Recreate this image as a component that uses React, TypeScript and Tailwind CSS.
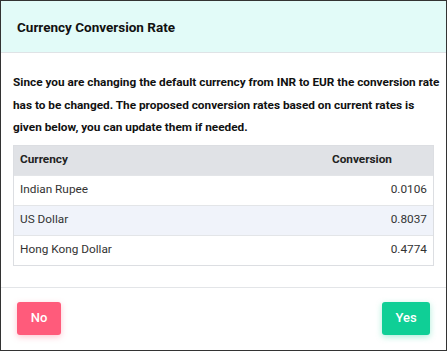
import React from "react";

const rows = [
  { name: "Indian Rupee", rate: "0.0106" },
  { name: "US Dollar", rate: "0.8037" },
  { name: "Hong Kong Dollar", rate: "0.4774" },
];

export default function App() {
  return (
    <div
      className="w-[448px] h-[353px] bg-white"
      style={{ fontFamily: "Roboto, 'Noto Sans', sans-serif" }}
    >
      <div className="w-[447px] h-[351px] border border-[#333] flex flex-col overflow-hidden">
        <div className="h-[52px] bg-[#e2fbf8] border-b border-[#dfe3e6] flex items-center px-4 shrink-0">
          <h2 className="text-[13.5px] font-bold text-[#111] mt-[1px]">Currency Conversion Rate</h2>
        </div>
        <div className="pl-3 pr-[11px] pt-[18px] flex flex-col">
          <p className="text-[11.8px] font-bold leading-[22.5px] text-[#111] whitespace-nowrap">
            Since you are changing the default currency from INR to EUR the conversion rate
            <br />
            has to be changed. The proposed conversion rates based on current rates is
            <br />
            given below, you can update them if needed.
          </p>
          <div className="mt-[6px] mr-[1px] border border-[#dcdee2] text-[11.8px] text-[#333]">
            <div className="h-[29px] bg-[#e0e2e6] flex items-center justify-between pl-[6px] pr-[41px] font-bold text-[#222]">
              <span>Currency</span>
              <span>Conversion</span>
            </div>
            {rows.map((r, i) => (
              <div
                key={r.name}
                className={`h-[30px] flex items-center justify-between pl-[6px] pr-[6px] border-t border-[#e3e5e8] ${i === 1 ? "bg-[#f0f3fa]" : "bg-white"}`}
              >
                <span>{r.name}</span>
                <span>{r.rate}</span>
              </div>
            ))}
          </div>
        </div>
        <div className="mt-[21px] border-t border-[#e3e5e8] flex items-center justify-between px-4 pt-[14px]">
          <button className="h-[33px] w-[44px] rounded-[3px] bg-[#ff5b7b] text-white text-[13px] font-medium shadow-[0_2px_6px_rgba(255,91,123,0.35)]">
            No
          </button>
          <button className="h-[33px] w-[48px] rounded-[3px] bg-[#0fcf96] text-white text-[13px] font-medium shadow-[0_2px_6px_rgba(15,207,150,0.35)]">
            Yes
          </button>
        </div>
      </div>
    </div>
  );
}
